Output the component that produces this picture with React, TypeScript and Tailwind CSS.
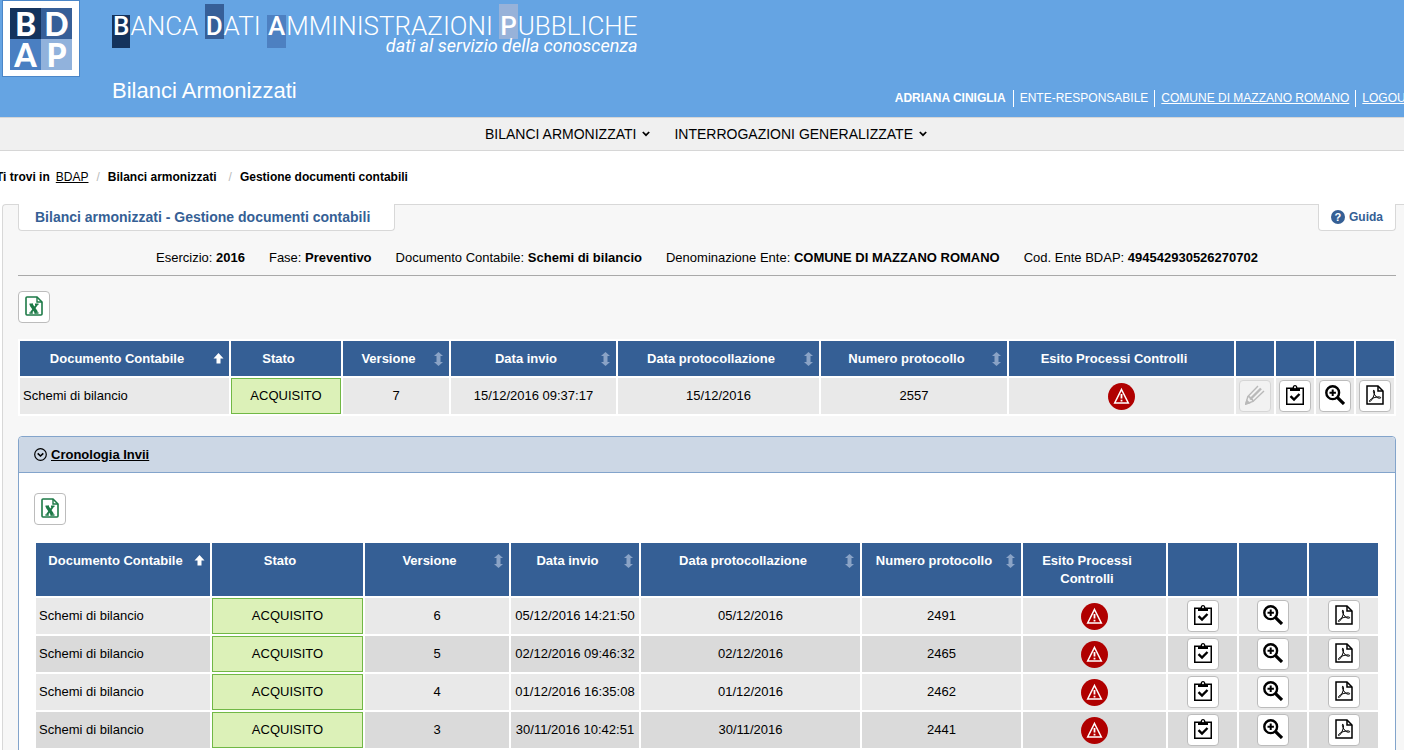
import React from 'react'
import { cx } from 'class-variance-authority'

interface Column {
  label: string
  width: number
  sort?: 'asc' | 'both'
}

interface Submission {
  version: number
  sentAt: string
  protocolDate: string
  protocolNumber: string
}

const currentColumns: Column[] = [
  { label: 'Documento Contabile', width: 209, sort: 'asc' },
  { label: 'Stato', width: 110 },
  { label: 'Versione', width: 106, sort: 'both' },
  { label: 'Data invio', width: 165, sort: 'both' },
  { label: 'Data protocollazione', width: 201, sort: 'both' },
  { label: 'Numero protocollo', width: 186, sort: 'both' },
  { label: 'Esito Processi Controlli', width: 225 },
  { label: '', width: 38 },
  { label: '', width: 38 },
  { label: '', width: 38 },
  { label: '', width: 38 },
]

const historyColumns: Column[] = [
  { label: 'Documento Contabile', width: 174, sort: 'asc' },
  { label: 'Stato', width: 151 },
  { label: 'Versione', width: 144, sort: 'both' },
  { label: 'Data invio', width: 128, sort: 'both' },
  { label: 'Data protocollazione', width: 219, sort: 'both' },
  { label: 'Numero protocollo', width: 159, sort: 'both' },
  { label: 'Esito Processi Controlli', width: 143 },
  { label: '', width: 69 },
  { label: '', width: 68 },
  { label: '', width: 69 },
]

const current: Submission[] = [
  { version: 7, sentAt: '15/12/2016 09:37:17', protocolDate: '15/12/2016', protocolNumber: '2557' },
]

const history: Submission[] = [
  { version: 6, sentAt: '05/12/2016 14:21:50', protocolDate: '05/12/2016', protocolNumber: '2491' },
  { version: 5, sentAt: '02/12/2016 09:46:32', protocolDate: '02/12/2016', protocolNumber: '2465' },
  { version: 4, sentAt: '01/12/2016 16:35:08', protocolDate: '01/12/2016', protocolNumber: '2462' },
  { version: 3, sentAt: '30/11/2016 10:42:51', protocolDate: '30/11/2016', protocolNumber: '2441' },
]

const details = [
  { label: 'Esercizio:', value: '2016' },
  { label: 'Fase:', value: 'Preventivo' },
  { label: 'Documento Contabile:', value: 'Schemi di bilancio' },
  { label: 'Denominazione Ente:', value: 'COMUNE DI MAZZANO ROMANO' },
  { label: 'Cod. Ente BDAP:', value: '494542930526270702' },
]

function ExcelIcon() {
  return (
    <svg width="18" height="20" viewBox="0 0 18 20" fill="none" stroke="#1d7a47" strokeWidth="1.6" aria-hidden="true">
      <path d="M1 2Q1 1 2 1H12L17 6V18Q17 19 16 19H2Q1 19 1 18Z" />
      <path d="M12 1V6H17" strokeWidth="1.4" />
      <path d="M6 8.500L11.500 16.500" strokeWidth="3.200" />
      <path d="M12 8.500L6 16.500" strokeWidth="2" />
      <path d="M4.500 8.300H8M10 8.300H13.500M4.400 17H7.800M9.400 17H13.500" strokeWidth="1.400" />
    </svg>
  )
}

function PdfIcon() {
  return (
    <svg width="18" height="20" viewBox="0 0 18 20" fill="none" stroke="#000" strokeWidth="1.500" aria-hidden="true">
      <path d="M1 1H12L17 6V19H1Z" />
      <path d="M12 1V6H17" />
      <path
        d="M7.600 5.200C6.800 5.800 7.800 9.500 10.500 12C12.500 13.800 15.300 13.300 14.700 12.400C13.800 11.300 9.500 12 6.500 13.300C4.500 14.300 2.900 16 3.500 16.500C4.500 17.300 7 13.300 8 10C8.800 7.500 8.600 5 7.600 5.200Z"
        strokeWidth="1"
      />
    </svg>
  )
}

function ClipboardIcon() {
  return (
    <svg width="18" height="20" viewBox="0 0 18 20" fill="none" stroke="#000" aria-hidden="true">
      <rect x="0.750" y="3.250" width="16.500" height="16" strokeWidth="1.500" />
      <path d="M4 6V4Q4 3 5 3H6.500Q6.800 0 9 0Q11.200 0 11.500 3H13Q14 3 14 4V6Z" fill="#000" stroke="none" />
      <circle cx="9" cy="2.200" r="1" fill="#fff" stroke="none" />
      <path d="M4.500 11.200L8 14.600L13.500 9" strokeWidth="2.400" />
    </svg>
  )
}

function ZoomInIcon() {
  return (
    <svg width="20" height="20" viewBox="0 0 20 20" fill="none" stroke="#000" aria-hidden="true">
      <circle cx="7.700" cy="7.700" r="6.400" strokeWidth="2.400" />
      <path d="M7.700 4.500V10.900M4.500 7.700H10.900" strokeWidth="2" />
      <path d="M12.300 12.300L19 19" strokeWidth="3.200" />
    </svg>
  )
}

function PencilIcon() {
  return (
    <svg width="20" height="20" viewBox="0 0 20 20" fill="none" stroke="#b9b9b9" strokeWidth="1.400" aria-hidden="true">
      <path d="M13 1L2.800 11.500L0.800 19L8 16.500L19 6" />
      <path d="M16 3.500L5.500 14" strokeWidth="2.400" />
      <path d="M2.800 11.500Q5.500 11.500 5.500 14Q8 14 8 16.500" />
      <path d="M0.800 19L1.800 15.500L4.300 18Z" fill="#b9b9b9" />
    </svg>
  )
}

function AlertIcon() {
  return (
    <svg className="mx-auto block" width="27" height="27" viewBox="0 0 27 27" role="img" aria-label="Errore">
      <circle cx="13.500" cy="13.500" r="13.500" fill="#b00000" />
      <path d="M13.500 6.500L20.300 20H6.700Z" fill="none" stroke="#fff" strokeWidth="1.500" />
      <path d="M13.500 11V15.500M13.500 16.700V18.400" stroke="#fff" strokeWidth="1.800" />
    </svg>
  )
}

function SortIcon({ sort }: { sort: 'asc' | 'both' }) {
  if (sort === 'asc') {
    return (
      <svg width="11" height="14" viewBox="0 0 11 14" fill="#fff" aria-hidden="true">
        <path d="M5.500 1L10.500 6.500H7.500V11.500H3.500V6.500H0.500Z" />
      </svg>
    )
  }
  return (
    <svg width="9" height="14" viewBox="0 0 9 14" fill="#8aa3c6" aria-hidden="true">
      <path d="M4.500 0L9 4H6.500V10H9L4.500 14L0 10H2.500V4H0Z" />
    </svg>
  )
}

function Chevron() {
  return (
    <svg width="8" height="6" viewBox="0 0 8 6" fill="none" stroke="#000" strokeWidth="1.700" aria-hidden="true">
      <path d="M0.800 1L4 4.200L7.200 1" />
    </svg>
  )
}

function IconButton({ title, disabled, children }: { title: string; disabled?: boolean; children: React.ReactNode }) {
  return (
    <button
      type="button"
      aria-label={title}
      disabled={disabled}
      className={cx(
        'inline-flex size-8 items-center justify-center rounded border pb-[2px] align-middle',
        disabled ? 'border-[#d6d6d6] bg-[#f2f2f2]' : 'border-[#bcbcbc] bg-white'
      )}
    >
      {children}
    </button>
  )
}

function SubmissionTable({ columns, rows, editable }: { columns: Column[]; rows: Submission[]; editable?: boolean }) {
  return (
    <table className="w-full table-fixed border-separate border-spacing-[2px] bg-white text-center text-[13px] leading-[18px]">
      <colgroup>
        {columns.map((column, i) => (
          <col key={i} style={{ width: column.width }} />
        ))}
      </colgroup>
      <thead>
        <tr className="bg-[#355f95] text-white">
          {columns.map((column, i) => (
            <th key={i} className="px-[3px] pt-[9px] pb-2 align-top font-bold">
              {column.label && (
                <div className="flex">
                  <span className="flex-1">{column.label}</span>
                  <span className="flex h-[18px] w-[15px] items-center justify-center">
                    {column.sort && <SortIcon sort={column.sort} />}
                  </span>
                </div>
              )}
            </th>
          ))}
        </tr>
      </thead>
      <tbody>
        {rows.map((row) => (
          <tr key={row.version} className="h-9 bg-[#e9e9e9] even:bg-[#dadada]">
            <td className="px-[3px] text-left">Schemi di bilancio</td>
            <td className="border border-[#71b845] bg-[#dcf1b8]">ACQUISITO</td>
            <td>{row.version}</td>
            <td>{row.sentAt}</td>
            <td>{row.protocolDate}</td>
            <td>{row.protocolNumber}</td>
            <td>
              <AlertIcon />
            </td>
            {editable && (
              <td>
                <IconButton title="Modifica" disabled>
                  <PencilIcon />
                </IconButton>
              </td>
            )}
            <td>
              <IconButton title="Esito controlli">
                <ClipboardIcon />
              </IconButton>
            </td>
            <td>
              <IconButton title="Dettaglio">
                <ZoomInIcon />
              </IconButton>
            </td>
            <td>
              <IconButton title="Scarica PDF">
                <PdfIcon />
              </IconButton>
            </td>
          </tr>
        ))}
      </tbody>
    </table>
  )
}

function Logo() {
  return (
    <div className="ml-[2px] h-[77px] w-[78px] shrink-0 border border-[#4a86c8] bg-white p-[7px]">
      <div className="grid size-[62px] grid-cols-2 grid-rows-2 text-center font-['Lato',sans-serif] text-[32px] leading-[31px] font-black text-white">
        <span className="bg-[#14335d]">B</span>
        <span className="bg-[#365f98]">D</span>
        <span className="bg-[#4a7fc2]">A</span>
        <span className="bg-[#91b2dc]">P</span>
      </div>
    </div>
  )
}

function Title() {
  return (
    <div className="pt-1 font-['Roboto',sans-serif] text-white">
      <h1 className="text-[26px] leading-5 font-light whitespace-nowrap">
        <span className="inline-block bg-[#14335d] px-px pt-px pb-3 font-medium">B</span>ANCA{' '}
        <span className="inline-block bg-[#365f98] px-px pt-3 pb-[3px] font-medium">D</span>ATI{' '}
        <span className="inline-block bg-[#4d80c1] px-px pt-px pb-3 font-medium">A</span>MMINISTRAZIONI{' '}
        <span className="inline-block bg-[#97b2d9] px-px pt-3 pb-[3px] font-medium">P</span>UBBLICHE
      </h1>
      <p className="-mt-3 text-right text-[18px] leading-5 italic">dati al servizio della conoscenza</p>
    </div>
  )
}

export default function App() {
  return (
    <div className="min-h-screen overflow-hidden bg-white font-['Liberation_Sans',Arial,sans-serif] text-[13px] text-black">
      <header className="flex h-[117px] bg-[#65a4e3] text-white">
        <Logo />
        <div className="ml-8 flex flex-col">
          <Title />
          <p className="mt-[21px] text-[22px] leading-7">Bilanci Armonizzati</p>
        </div>
        <div className="-mr-[9px] mb-[10px] ml-auto flex items-end text-[12px] leading-[17px] whitespace-nowrap">
          <strong className="border-r border-white pr-[7px]">ADRIANA CINIGLIA</strong>
          <span className="border-r border-white px-[6px]">ENTE-RESPONSABILE</span>
          <span className="border-r border-white px-[6px]">
            <a href="#ente" className="underline">COMUNE DI MAZZANO ROMANO</a>
          </span>
          <a href="#logout" className="pl-[6px] underline">LOGOUT</a>
        </div>
      </header>

      <nav className="flex h-[34px] items-center justify-center gap-6 border-y border-[#d6d6d6] bg-[#f0f0f0] pl-2 text-[14px]">
        <a href="#bilanci" className="flex items-center gap-[6px]">
          BILANCI ARMONIZZATI <Chevron />
        </a>
        <a href="#interrogazioni" className="flex items-center gap-[6px]">
          INTERROGAZIONI GENERALIZZATE <Chevron />
        </a>
      </nav>

      <div className="-ml-1 flex pt-4 pb-[17px] text-[12px] leading-5 font-bold">
        <span>Ti trovi in</span>
        <a href="#bdap" className="ml-[6px] font-normal underline">BDAP</a>
        <span className="mx-2 font-normal text-[#bbb]">/</span>
        <span>Bilanci armonizzati</span>
        <span className="mr-2 ml-3 font-normal text-[#bbb]">/</span>
        <span>Gestione documenti contabili</span>
      </div>

      <main className="ml-[2px] rounded-tl border-t border-l border-[#d8d8d8] bg-[#f7f7f7] pr-2 pl-[15px]">
        <div className="-mt-px flex justify-between leading-[26px] font-bold text-[#355f95]">
          <h2 className="rounded-b border border-t-0 border-[#d8d8d8] bg-white pr-6 pl-4 text-[14px]">
            Bilanci armonizzati - Gestione documenti contabili
          </h2>
          <a href="#guida" className="flex items-center gap-1 rounded-b border border-t-0 border-[#d8d8d8] bg-white px-3 text-[12px]">
            <span className="flex size-[14px] items-center justify-center rounded-full bg-[#355f95] text-[11px] leading-[14px] text-white">
              ?
            </span>
            Guida
          </a>
        </div>

        <div className="flex justify-center gap-6 border-b border-[#a9a9a9] pt-[17px] pb-[7px] leading-5 whitespace-nowrap">
          {details.map((item) => (
            <span key={item.label}>
              {item.label} <strong>{item.value}</strong>
            </span>
          ))}
        </div>

        <div className="pt-[15px] pb-4 leading-none">
          <IconButton title="Esporta in Excel">
            <ExcelIcon />
          </IconButton>
        </div>

        <SubmissionTable columns={currentColumns} rows={current} editable />

        <section className="mt-5 rounded-t border border-[#83a4cb] bg-white">
          <h3 className="flex h-9 items-center gap-1 rounded-t border-b border-[#83a4cb] bg-[#ccd7e5] pl-[15px] font-bold">
            <svg width="13" height="13" viewBox="0 0 13 13" fill="none" stroke="#000" strokeWidth="1.200" aria-hidden="true">
              <circle cx="6.500" cy="6.500" r="5.800" />
              <path d="M3.700 5.300L6.500 8L9.300 5.300" strokeWidth="1.600" />
            </svg>
            <a href="#cronologia" className="underline">Cronologia Invii</a>
          </h3>
          <div className="px-[15px] pt-5 pb-4">
            <div className="pb-4 leading-none">
              <IconButton title="Esporta cronologia in Excel">
                <ExcelIcon />
              </IconButton>
            </div>
            <SubmissionTable columns={historyColumns} rows={history} />
          </div>
        </section>
      </main>
    </div>
  )
}
